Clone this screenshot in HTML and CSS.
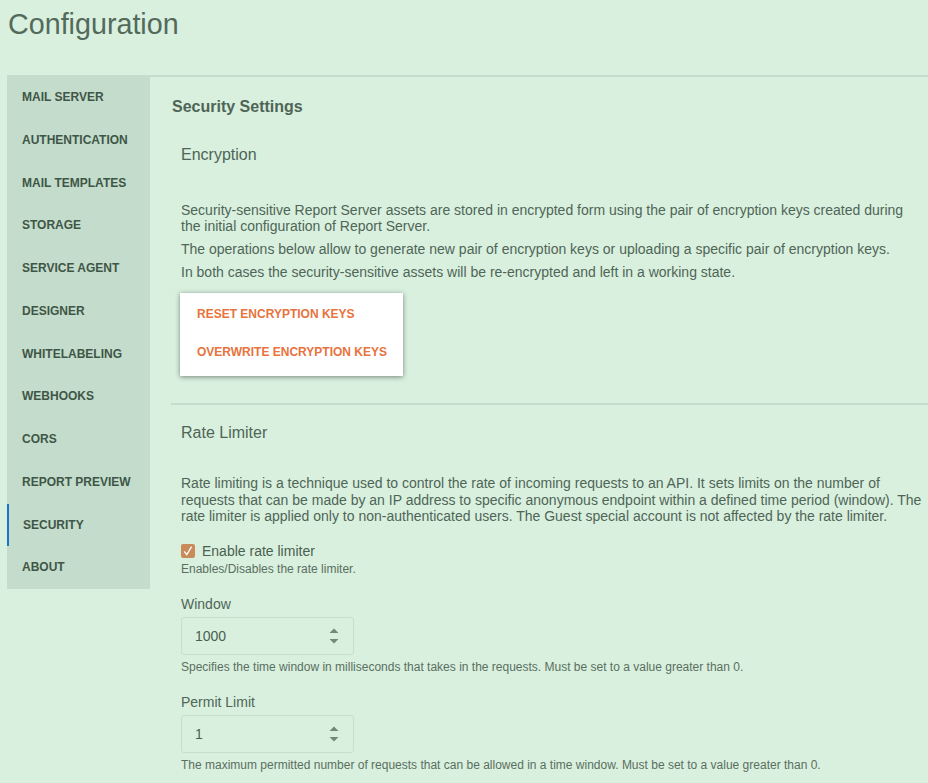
FILE: index.html
```html
<!DOCTYPE html>
<html>
<head>
<meta charset="utf-8">
<link rel="stylesheet" href="styles.css">
</head>
<body>
<h1 class="page-title">Configuration</h1>
<div class="layout">
  <nav class="sidebar">
    <a class="nav-item">MAIL SERVER</a>
    <a class="nav-item">AUTHENTICATION</a>
    <a class="nav-item">MAIL TEMPLATES</a>
    <a class="nav-item">STORAGE</a>
    <a class="nav-item">SERVICE AGENT</a>
    <a class="nav-item">DESIGNER</a>
    <a class="nav-item">WHITELABELING</a>
    <a class="nav-item">WEBHOOKS</a>
    <a class="nav-item">CORS</a>
    <a class="nav-item">REPORT PREVIEW</a>
    <a class="nav-item active">SECURITY</a>
    <a class="nav-item">ABOUT</a>
  </nav>
  <main class="content">
    <h2 class="content-title">Security Settings</h2>
    <section class="section enc">
      <h3 class="section-title">Encryption</h3>
      <div class="paras">
        <p>Security-sensitive Report Server assets are stored in encrypted form using the pair of encryption keys created during the initial configuration of Report Server.</p>
        <p>The operations below allow to generate new pair of encryption keys or uploading a specific pair of encryption keys.</p>
        <p>In both cases the security-sensitive assets will be re-encrypted and left in a working state.</p>
      </div>
      <div class="menu">
        <div class="menu-item">RESET ENCRYPTION KEYS</div>
        <div class="menu-item">OVERWRITE ENCRYPTION KEYS</div>
      </div>
    </section>
    <hr class="divider">
    <section class="section rate">
      <h3 class="section-title">Rate Limiter</h3>
      <div class="paras">
        <p>Rate limiting is a technique used to control the rate of incoming requests to an API. It sets limits on the number of requests that can be made by an IP address to specific anonymous endpoint within a defined time period (window). The rate limiter is applied only to non-authenticated users. The Guest special account is not affected by the rate limiter.</p>
      </div>
      <label class="check-row">
        <span class="checkbox"><svg width="14" height="14" viewBox="0 0 14 14"><path d="M3.2 7.4 L5.8 10.6 L10.6 2.6" fill="none" stroke="#fff" stroke-width="1.3"/></svg></span>
        <span class="check-label">Enable rate limiter</span>
      </label>
      <div class="hint hint-check">Enables/Disables the rate limiter.</div>

      <div class="field">
        <div class="field-label">Window</div>
        <div class="num-input">
          <span class="num-value">1000</span>
          <span class="spinner"><svg width="12" height="18" viewBox="0 0 12 18"><path d="M1.5 6 L6 1.5 L10.5 6 Z" fill="#6f8a78"/><path d="M1.5 12 L10.5 12 L6 16.5 Z" fill="#6f8a78"/></svg></span>
        </div>
        <div class="hint">Specifies the time window in milliseconds that takes in the requests. Must be set to a value greater than 0.</div>
      </div>

      <div class="field">
        <div class="field-label">Permit Limit</div>
        <div class="num-input">
          <span class="num-value">1</span>
          <span class="spinner"><svg width="12" height="18" viewBox="0 0 12 18"><path d="M1.5 6 L6 1.5 L10.5 6 Z" fill="#6f8a78"/><path d="M1.5 12 L10.5 12 L6 16.5 Z" fill="#6f8a78"/></svg></span>
        </div>
        <div class="hint">The maximum permitted number of requests that can be allowed in a time window. Must be set to a value greater than 0.</div>
      </div>
    </section>
  </main>
</div>
</body>
</html>
```

FILE: styles.css
```css
* { box-sizing: border-box; }
html, body { height: 100%; }
body {
  margin: 0;
  background: #d9f0df;
  color: #4f6556;
  font-family: "Liberation Sans", Arial, sans-serif;
  overflow: hidden;
}
.page-title {
  margin: 8px 0 35px 8px;
  font-size: 28.7px;
  line-height: 33px;
  font-weight: normal;
  color: #536a5b;
}
.layout {
  display: flex;
  align-items: flex-start;
  margin-top: -1px;
}
.sidebar {
  margin-left: 7px;
  width: 143px;
  flex: none;
  background: #c3dccb;
  display: flex;
  flex-direction: column;
  padding-top: 1px;
}
.nav-item {
  display: block;
  height: 42.75px;
  line-height: 42.75px;
  padding-left: 13px;
  font-size: 12px;
  font-weight: bold;
  color: #3f5647;
  border-left: 2px solid transparent;
}
.nav-item.active {
  border-left-color: #1a74c9;
  padding-left: 14px;
}
.content {
  flex: 1;
  border-top: 2px solid #c5dccc;
  padding: 20px 0 0 21px;
}
.content-title {
  margin: 0 0 28px 1px;
  font-size: 16px;
  line-height: 20px;
  font-weight: bold;
  color: #4f6556;
}
.section {
  padding: 0 6px 0 10px;
}
.section-title {
  margin: 0;
  font-size: 16px;
  line-height: 20px;
  font-weight: normal;
  color: #4f6556;
}
.paras { margin-top: 37px; }
.paras p {
  margin: 0 0 7px;
  font-size: 14px;
  line-height: 16px;
}
.rate .paras { margin-top: 32px; }
.rate .paras p { line-height: 16.5px; }
.menu {
  margin: 13px 0 0 -1px;
  width: 223px;
  background: #fff;
  box-shadow: 0 1px 5px rgba(0, 0, 0, 0.45);
  padding: 2px 0 5px;
}
.menu-item {
  height: 38px;
  line-height: 38px;
  padding-left: 17px;
  font-size: 12px;
  font-weight: bold;
  color: #e8733d;
}
.divider {
  margin: 27px 0 0 0;
  border: 0;
  border-top: 2px solid #c5dccc;
  height: 0;
}
.rate { padding-top: 18px; }
.check-row {
  display: flex;
  align-items: center;
  gap: 7px;
  margin-top: 18px;
  height: 16px;
}
.checkbox {
  width: 14px;
  height: 14px;
  background: #c98b5a;
  border-radius: 2px;
  display: flex;
}
.check-label {
  font-size: 14px;
  color: #4a5f50;
}
.hint {
  font-size: 12px;
  line-height: 14px;
  color: #5a6f60;
}
.hint-check { margin-top: 3px; }
.field { margin-top: 20px; }
.field + .field { margin-top: 20px; }
.field-label {
  font-size: 14px;
  line-height: 16px;
}
.num-input {
  margin-top: 5px;
  width: 173px;
  height: 38px;
  border: 1px solid #c6dfcd;
  border-radius: 3px;
  display: flex;
  align-items: center;
  justify-content: space-between;
  padding: 0 13px 0 13px;
}
.num-value {
  font-size: 14px;
  color: #4a5f50;
}
.spinner { display: flex; }
.field .hint { margin-top: 5px; }
```
